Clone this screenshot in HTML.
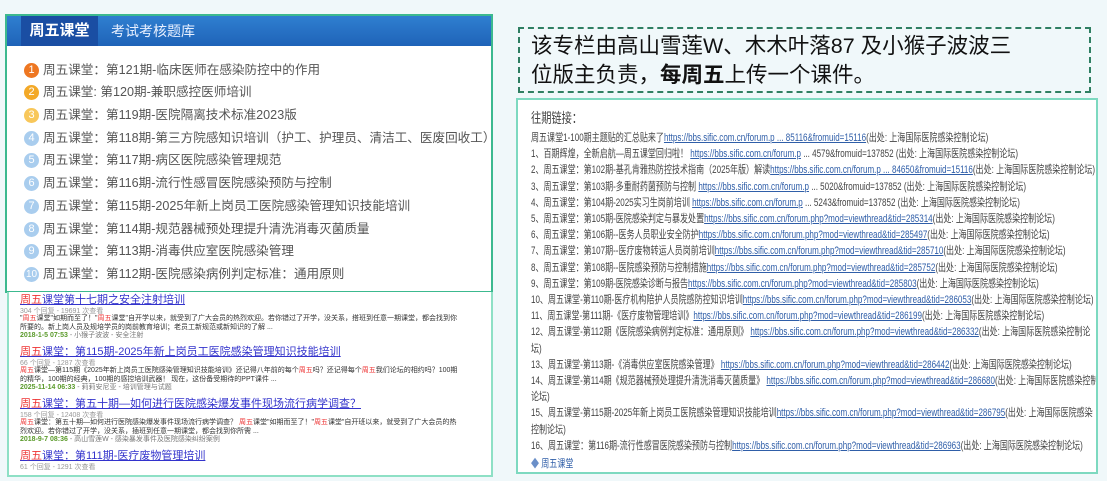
<!DOCTYPE html>
<html><head><meta charset="utf-8"><style>
*{margin:0;padding:0;box-sizing:border-box}
body{width:1107px;height:481px;overflow:hidden;background:#f0f8fa;font-family:"Liberation Sans","Noto Sans CJK SC",sans-serif;position:relative}
.lp{position:absolute;left:5px;top:14px;width:488px;height:279px;border:2px solid #3cb98f;background:#fff}
.hd{height:30px;background:linear-gradient(#2f7fd0,#1f63b8);position:relative}
.tab{position:absolute;left:14px;top:0;width:77px;height:30px;background:#1a4ea3;color:#fff;font-weight:bold;font-size:15px;line-height:30px;text-align:center}
.tab2{position:absolute;left:104px;top:0;color:#e8f0ff;font-size:14px;line-height:30px}
.it{position:absolute;left:17px;font-size:12.6px;color:#555;white-space:nowrap;line-height:16px;display:flex;align-items:center}
.c{display:inline-block;width:15px;height:15px;border-radius:50%;color:#fff;font-size:11px;text-align:center;line-height:15px;margin-right:4px;flex:none}
.sr{position:absolute;left:7px;top:292px;width:486px;height:185px;background:#fff;border:2px solid #8ee0c5;border-top:none}
.r{position:absolute;left:11px;white-space:nowrap}
.t{font-size:11px;color:#3333cc;text-decoration:underline;line-height:13px}
.t b{color:#e33;font-weight:normal}
.m{font-size:7px;color:#999;line-height:8px}
.e{font-size:7px;color:#333;line-height:8.5px}
.e b{color:#e33;font-weight:normal}
.d{font-size:7px;color:#777;line-height:8px}
.d i{font-style:normal;color:#5a9a2a;font-weight:bold}
.db{position:absolute;left:518px;top:27px;width:573px;height:66px;border:2px dashed #2f7f62;font-size:21.5px;line-height:29px;color:#111;padding:3px 0 0 11px}
.rp{position:absolute;left:516px;top:98px;width:582px;height:376px;border:2px solid #7dd9c0;background:#fff;overflow:hidden}
.in{position:absolute;left:13px;top:8px;width:790px;transform:scaleX(.73);transform-origin:0 0;font-size:11px;line-height:16.2px;color:#444}
.in div{white-space:nowrap}
.in a{color:#2f5ea8;text-decoration:underline}
</style></head><body>
<div class="lp">
<div class="hd"><div class="tab">周五课堂</div><div class="tab2">考试考核题库</div></div>
<div class="it" style="top:46px"><span class="c" style="background:#ee7722">1</span>周五课堂：第121期-临床医师在感染防控中的作用</div>
<div class="it" style="top:68px"><span class="c" style="background:#f3a928">2</span>周五课堂: 第120期-兼职感控医师培训</div>
<div class="it" style="top:91px"><span class="c" style="background:#f8c75a">3</span>周五课堂：第119期-医院隔离技术标准2023版</div>
<div class="it" style="top:114px"><span class="c" style="background:#a9cdee">4</span>周五课堂：第118期-第三方院感知识培训（护工、护理员、清洁工、医废回收工）</div>
<div class="it" style="top:136px"><span class="c" style="background:#a9cdee">5</span>周五课堂：第117期-病区医院感染管理规范</div>
<div class="it" style="top:159px"><span class="c" style="background:#a9cdee">6</span>周五课堂：第116期-流行性感冒医院感染预防与控制</div>
<div class="it" style="top:182px"><span class="c" style="background:#a9cdee">7</span>周五课堂：第115期-2025年新上岗员工医院感染管理知识技能培训</div>
<div class="it" style="top:205px"><span class="c" style="background:#a9cdee">8</span>周五课堂：第114期-规范器械预处理提升清洗消毒灭菌质量</div>
<div class="it" style="top:227px"><span class="c" style="background:#a9cdee">9</span>周五课堂：第113期-消毒供应室医院感染管理</div>
<div class="it" style="top:250px"><span class="c" style="background:#a9cdee;font-size:10px">10</span>周五课堂：第112期-医院感染病例判定标准：通用原则</div>
</div>
<div class="sr">
<div class="r t" style="top:2px"><b>周五</b>课堂第十七期之安全注射培训</div>
<div class="r m" style="top:16px">304 个回复 - 19691 次查看</div>
<div class="r e" style="top:23px">"<b>周五</b>课堂"如期而至了！"<b>周五</b>课堂"自开学以来，就受到了广大会员的热烈欢迎。若你错过了开学，没关系，搭班到任意一期课堂，都会找到你<br>所要的。新上岗人员及规培学员的岗前教育培训；老员工新规范或新知识的了解 ...</div>
<div class="r d" style="top:40px"><i>2018-1-5 07:53</i> - 小猴子波波 - 安全注射</div>
<div class="r t" style="top:54px"><b>周五</b>课堂：第115期-2025年新上岗员工医院感染管理知识技能培训</div>
<div class="r m" style="top:68px">66 个回复 - 1287 次查看</div>
<div class="r e" style="top:75px"><b>周五</b>课堂—第115期《2025年新上岗员工医院感染管理知识技能培训》还记得八年前的每个<b>周五</b>吗？还记得每个<b>周五</b>我们论坛的相约吗？100期<br>的精华，100期的经典，100期的感控培训武器！ 现在，这份备受期待的PPT课件 ...</div>
<div class="r d" style="top:92px"><i>2025-11-14 06:33</i> - 莉莉安尼亚 - 培训管理与试题</div>
<div class="r t" style="top:106px"><b>周五</b>课堂：第五十期—如何进行医院感染爆发事件现场流行病学调查？</div>
<div class="r m" style="top:120px">158 个回复 - 12408 次查看</div>
<div class="r e" style="top:127px"><b>周五</b>课堂：第五十期—如何进行医院感染爆发事件现场流行病学调查？ <b>周五</b>课堂"如期而至了！"<b>周五</b>课堂"自开班以来，就受到了广大会员的热<br>烈欢迎。若你错过了开学，没关系，插班到任意一期课堂，都会找到你所需 ...</div>
<div class="r d" style="top:144px"><i>2018-9-7 08:36</i> - 高山雪莲W - 感染暴发事件及医院感染纠纷案例</div>
<div class="r t" style="top:158px"><b>周五</b>课堂：第111期-医疗废物管理培训</div>
<div class="r m" style="top:172px">61 个回复 - 1291 次查看</div>
</div>
<div class="db">该专栏由高山雪莲W、木木叶落87 及小猴子波波三<br>位版主负责，<b>每周五</b>上传一个课件。</div>
<div class="rp"><div class="in">
<div style="font-size:14px;line-height:20px;margin-bottom:2px">往期链接：</div>
<div>周五课堂1-100期主题贴的汇总贴来了<a>https://bbs.sific.com.cn/forum.p ... 85116&amp;fromuid=15116</a>(出处: 上海国际医院感染控制论坛)</div>
<div>1、百期辉煌，全新启航—周五课堂回归啦！ <a>https://bbs.sific.com.cn/forum.p</a> ... 4579&amp;fromuid=137852 (出处: 上海国际医院感染控制论坛)</div>
<div>2、周五课堂：第102期-基孔肯雅热防控技术指南（2025年版）解读<a>https://bbs.sific.com.cn/forum.p ... 84650&amp;fromuid=15116</a>(出处: 上海国际医院感染控制论坛)</div>
<div>3、周五课堂：第103期-多重耐药菌预防与控制 <a>https://bbs.sific.com.cn/forum.p</a> ... 5020&amp;fromuid=137852 (出处: 上海国际医院感染控制论坛)</div>
<div>4、周五课堂：第104期-2025实习生岗前培训 <a>https://bbs.sific.com.cn/forum.p</a> ... 5243&amp;fromuid=137852 (出处: 上海国际医院感染控制论坛)</div>
<div>5、周五课堂：第105期-医院感染判定与暴发处置<a>https://bbs.sific.com.cn/forum.php?mod=viewthread&amp;tid=285314</a>(出处: 上海国际医院感染控制论坛)</div>
<div>6、周五课堂：第106期--医务人员职业安全防护<a>https://bbs.sific.com.cn/forum.php?mod=viewthread&amp;tid=285497</a>(出处: 上海国际医院感染控制论坛)</div>
<div>7、周五课堂：第107期--医疗废物转运人员岗前培训<a>https://bbs.sific.com.cn/forum.php?mod=viewthread&amp;tid=285710</a>(出处: 上海国际医院感染控制论坛)</div>
<div>8、周五课堂：第108期--医院感染预防与控制措施<a>https://bbs.sific.com.cn/forum.php?mod=viewthread&amp;tid=285752</a>(出处: 上海国际医院感染控制论坛)</div>
<div>9、周五课堂：第109期-医院感染诊断与报告<a>https://bbs.sific.com.cn/forum.php?mod=viewthread&amp;tid=285803</a>(出处: 上海国际医院感染控制论坛)</div>
<div>10、周五课堂-第110期-医疗机构陪护人员院感防控知识培训<a>https://bbs.sific.com.cn/forum.php?mod=viewthread&amp;tid=286053</a>(出处: 上海国际医院感染控制论坛)</div>
<div>11、周五课堂-第111期-《医疗废物管理培训》<a>https://bbs.sific.com.cn/forum.php?mod=viewthread&amp;tid=286199</a>(出处: 上海国际医院感染控制论坛)</div>
<div>12、周五课堂-第112期《医院感染病例判定标准：通用原则》 <a>https://bbs.sific.com.cn/forum.php?mod=viewthread&amp;tid=286332</a>(出处: 上海国际医院感染控制论<br>坛)</div>
<div>13、周五课堂-第113期-《消毒供应室医院感染管理》 <a>https://bbs.sific.com.cn/forum.php?mod=viewthread&amp;tid=286442</a>(出处: 上海国际医院感染控制论坛)</div>
<div>14、周五课堂-第114期《规范器械预处理提升清洗消毒灭菌质量》 <a>https://bbs.sific.com.cn/forum.php?mod=viewthread&amp;tid=286680</a>(出处: 上海国际医院感染控制<br>论坛)</div>
<div>15、周五课堂-第115期-2025年新上岗员工医院感染管理知识技能培训<a>https://bbs.sific.com.cn/forum.php?mod=viewthread&amp;tid=286795</a>(出处: 上海国际医院感染<br>控制论坛)</div>
<div>16、周五课堂：第116期-流行性感冒医院感染预防与控制<a>https://bbs.sific.com.cn/forum.php?mod=viewthread&amp;tid=286963</a>(出处: 上海国际医院感染控制论坛)</div>
<div style="color:#2f5ea8;margin-top:2px"><span style="color:#6a8fc8">&#9670;</span> 周五课堂</div>
</div></div>
</body></html>
